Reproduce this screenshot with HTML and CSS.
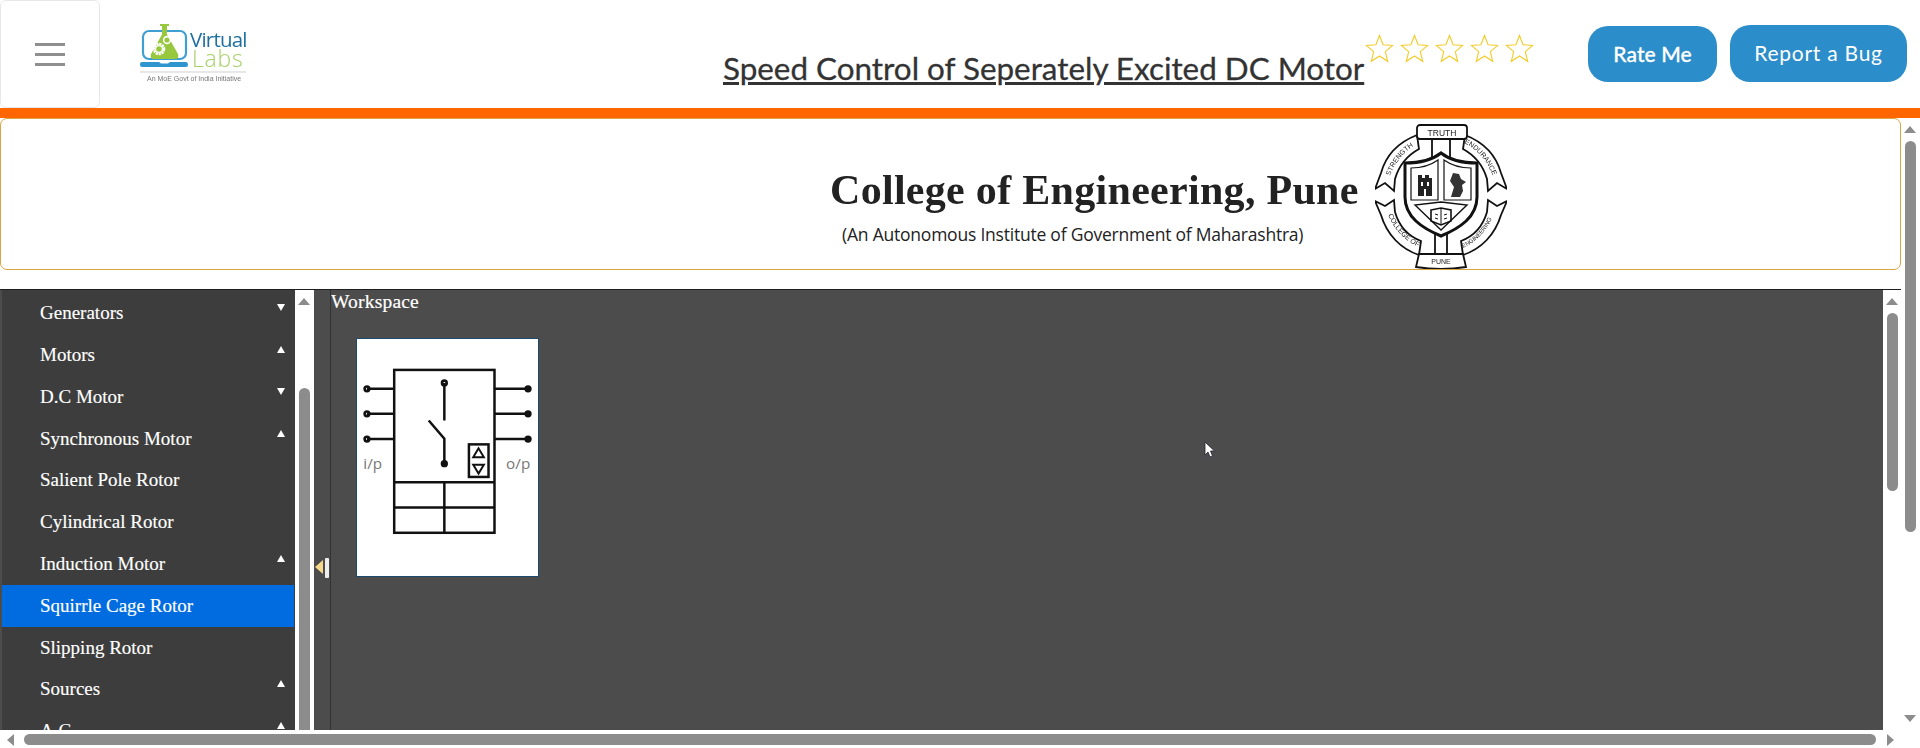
FILE: index.html
```html
<!DOCTYPE html>
<html lang="en">
<head>
    <meta charset="UTF-8">
    <meta name="viewport" content="width=device-width, initial-scale=1.0">
    <title>Speed Control of Seperately Excited DC Motor</title>
    <link rel="stylesheet" href="styles.css">
</head>
<body>
    <header class="topbar">
        <button class="menu-btn" aria-label="Menu"><span></span><span></span><span></span></button>
        <!-- Virtual Labs logo -->
        <svg class="vlab-logo" viewBox="0 0 108 60">
            <rect x="3" y="7" width="43" height="28" rx="6" fill="none" stroke="#3f9fd3" stroke-width="2.2"/>
            <path d="M0 40q0-2 2-2h17l2 1.500h7l2-1.500h16q2 0 2 2.500t-2 2.500H2q-2 0-2-2.500z" fill="#2f95cf"/>
            <path d="M20 0h9v2h-2v8.500L38 30q1.500 5-3 5H14q-4.500 0-3-5l11-19.500V2h-2z" fill="#97c83e"/>
            <circle cx="19" cy="25" r="5" fill="none" stroke="#fff" stroke-width="2.600" stroke-dasharray="2.200 .7"/>
            <circle cx="19" cy="25" r="3.400" fill="none" stroke="#fff" stroke-width="1.200"/>
            <circle cx="27" cy="16" r="3.400" fill="none" stroke="#fff" stroke-width="1.600"/>
            <text x="50" y="23" class="logo-virtual">Virtual</text>
            <text x="52" y="43" class="logo-labs">Labs</text>
            <line x1="0" y1="48" x2="106" y2="48" stroke="#bbb" stroke-width=".7"/>
            <text x="7" y="56.500" class="logo-sub">An MoE Govt of India Initiative</text>
        </svg>
        <h1 class="title">Speed Control of Seperately Excited DC Motor</h1>
        <div class="stars">
            <svg viewBox="0 0 30 30"><path d="M15 2l3.700 9.600 10 .7-7.700 6.500 2.500 10L15 23.300 6.500 28.800l2.500-10L1.300 12.300l10-.7z"/></svg>
            <svg viewBox="0 0 30 30"><path d="M15 2l3.700 9.600 10 .7-7.700 6.500 2.500 10L15 23.300 6.500 28.800l2.500-10L1.300 12.300l10-.7z"/></svg>
            <svg viewBox="0 0 30 30"><path d="M15 2l3.700 9.600 10 .7-7.700 6.500 2.500 10L15 23.300 6.500 28.800l2.500-10L1.300 12.300l10-.7z"/></svg>
            <svg viewBox="0 0 30 30"><path d="M15 2l3.700 9.600 10 .7-7.700 6.500 2.500 10L15 23.300 6.500 28.800l2.500-10L1.300 12.300l10-.7z"/></svg>
            <svg viewBox="0 0 30 30"><path d="M15 2l3.700 9.600 10 .7-7.700 6.500 2.500 10L15 23.300 6.500 28.800l2.500-10L1.300 12.300l10-.7z"/></svg>
        </div>
        <a class="pill rate" href="#">Rate Me</a>
        <a class="pill bug" href="#">Report a Bug</a>
    </header>
    <div class="orange-bar"></div>

    <div class="page">
        <main class="page-main">
            <section class="banner">
                <div class="banner-words">
                    <div class="college-name">College of Engineering, Pune</div>
                    <div class="college-sub">(An Autonomous Institute of Government of Maharashtra)</div>
                </div>
                <!-- college crest -->
                <svg class="crest" viewBox="0 0 132 146">
                    <defs>
                        <path id="rib-ul" d="M15 53C20 39 30 27 43 21"/>
                        <path id="rib-ur" d="M89 20C102 26 112 38 118 53"/>
                        <path id="rib-ll" d="M13 92C19 106 29 117 43 124"/>
                        <path id="rib-lr" d="M88 125C103 118 113 106 119 91"/>
                    </defs>
                    <g fill="#fff" stroke="#111" stroke-width="1.800">
                        <path d="M57 15v24M75 15v24M60 110v22M72 110v22" fill="none"/>
                        <path d="M42 12C24 19 11 32 6 50L0 66l10-6 9 8 1-12C24 42 33 32 44 26z"/>
                        <path d="M90 12C108 19 121 32 126 50L132 66l-10-6-9 8-1-12C108 42 99 32 88 26z"/>
                        <path d="M44 132C26 126 12 112 6 92L0 78l10 5 9-6 1 12C24 103 33 113 46 118z"/>
                        <path d="M88 132C106 126 120 112 126 92L132 78l-10 5-9-6-1 12C108 103 99 113 86 118z"/>
                        <rect x="42" y="2" width="50" height="14" rx="3"/>
                        <path d="M44 131h44l3 13q-25 4-50 0z"/>
                    </g>
                    <path d="M66 30c10 8 22 10 36 10v34c0 20-17 31-36 39-19-8-36-19-36-39V40c14 0 26-2 36-10z" fill="#fff" stroke="#111" stroke-width="3"/>
                    <path d="M36 45c11 0 20-3 27-8v40H36z" fill="none" stroke="#111" stroke-width="1.200"/>
                    <path d="M69 37c7 5 16 8 27 8v32H69z" fill="none" stroke="#111" stroke-width="1.200"/>
                    <path d="M40 82l26 25 26-25-26-3z" fill="none" stroke="#111" stroke-width="1.400"/>
                    <path d="M43 52h4v3h3v-3h4v3h3v18H43z" fill="#222"/>
                    <path d="M46 59h2v4h-2zM52 59h2v4h-2zM49 66h2v7h-2z" fill="#fff"/>
                    <path d="M78 50l6 1 2 5 5 3-4 3 1 6-3 6h-9l3-10-4-6z" fill="#333"/>
                    <path d="M56 87l10-2 10 2v11l-10 4-10-4z" fill="none" stroke="#111" stroke-width="1.600"/>
                    <path d="M66 85v17M60 91l3 1M60 95l3 1M69 92l3-1M69 96l3-1" stroke="#111" stroke-width="1"/>
                    <text x="67" y="12.500" class="crest-txt" text-anchor="middle">TRUTH</text>
                    <text x="66" y="141" class="crest-txt small" text-anchor="middle">PUNE</text>
                    <text class="crest-txt small"><textPath href="#rib-ul">STRENGTH</textPath></text>
                    <text class="crest-txt small"><textPath href="#rib-ur">ENDURANCE</textPath></text>
                    <text class="crest-txt small"><textPath href="#rib-ll">COLLEGE OF</textPath></text>
                    <text class="crest-txt tiny"><textPath href="#rib-lr">ENGINEERING</textPath></text>
                </svg>
            </section>

            <div class="sim-frame">
                <nav class="menu-pane">
                    <ul class="menu-list">
                        <li>Generators<i class="caret down"></i></li>
                        <li>Motors<i class="caret up"></i></li>
                        <li>D.C Motor<i class="caret down"></i></li>
                        <li>Synchronous Motor<i class="caret up"></i></li>
                        <li>Salient Pole Rotor</li>
                        <li>Cylindrical Rotor</li>
                        <li>Induction Motor<i class="caret up"></i></li>
                        <li class="active">Squirrle Cage Rotor</li>
                        <li>Slipping Rotor</li>
                        <li>Sources<i class="caret up"></i></li>
                        <li>A.C<i class="caret up"></i></li>
                    </ul>
                </nav>
                <div class="sb sb-menu">
                    <i class="arrow-up"></i>
                    <div class="thumb"></div>
                </div>
                <div class="splitter">
                    <i class="grip-arrow"></i><i class="grip-bar"></i>
                </div>
                <div class="workspace">
                    <div class="ws-label">Workspace</div>
                    <div class="block-card">
                        <!-- breaker block -->
                        <svg class="block-svg" viewBox="50 40 545 713" preserveAspectRatio="none">
                            <g fill="none" stroke="#111" stroke-width="7.500">
                                <rect x="162" y="133" width="302" height="490"/>
                                <path d="M162 471h302M162 547h302M313 471v152"/>
                                <path d="M80 190h82M80 265h82M80 341h82M464 190h101M464 265h101M464 341h101"/>
                                <path d="M313 172v113M266 285l47 55v75"/>
                                <rect x="387" y="357" width="59" height="98"/>
                                <path d="M416 369l-16 27h32zM400 418h32l-16 27z" stroke-width="6"/>
                                <circle cx="80" cy="190" r="7" stroke-width="8"/>
                                <circle cx="80" cy="265" r="7" stroke-width="8"/>
                                <circle cx="80" cy="341" r="7" stroke-width="8"/>
                                <circle cx="313" cy="172" r="7" stroke-width="8"/>
                            </g>
                            <g fill="#111">
                                <circle cx="565" cy="190" r="11"/>
                                <circle cx="565" cy="265" r="11"/>
                                <circle cx="565" cy="341" r="11"/>
                                <circle cx="313" cy="415" r="11"/>
                            </g>
                            <text x="69" y="432" class="block-txt">i/p</text>
                            <text x="499" y="432" class="block-txt">o/p</text>
                        </svg>
                    </div>
                    <svg class="cursor" viewBox="0 0 12 17"><path d="M1 1v13l3-3 2 5 2.500-1-2-5h4z" fill="#fff" stroke="#223" stroke-width=".8"/></svg>
                </div>
                <div class="sb sb-inner">
                    <i class="arrow-up"></i>
                    <div class="thumb"></div>
                </div>
            </div>
        </main>
        <div class="sb sb-page">
            <i class="arrow-up"></i>
            <div class="thumb"></div>
            <i class="arrow-down"></i>
        </div>
    </div>

    <div class="sb-horizontal">
        <i class="arrow-left"></i>
        <div class="thumb"></div>
        <i class="arrow-right"></i>
    </div>
</body>
</html>
```

FILE: styles.css
```css
/* page */
html, body {
    height: 100%;
}

body {
    margin: 0;
    width: 1920px;
    height: 748px;
    overflow: hidden;
    display: flex;
    flex-direction: column;
    background-color: #fff;
    font-family: "Liberation Serif", serif;
}

/* header */
.topbar {
    height: 108px;
    display: flex;
    flex-shrink: 0;
    background-color: #fff;
}

.menu-btn {
    width: 100px;
    height: 108px;
    padding: 0;
    display: flex;
    flex-direction: column;
    align-items: center;
    justify-content: center;
    gap: 7px;
    background-color: #fff;
    border: 1px solid #e8e8e8;
    border-radius: 6px;
}

.menu-btn span {
    width: 30px;
    height: 3px;
    background-color: #8f8f8f;
}

.vlab-logo {
    width: 108px;
    height: 60px;
    margin: 24px 0 0 40px;
    flex-shrink: 0;
    filter: blur(.3px);
}

.logo-virtual {
    font-family: "Open Sans", sans-serif;
    font-size: 20.500px;
    fill: #1f6f9f;
    letter-spacing: -.8px;
}

.logo-labs {
    font-family: "Open Sans", sans-serif;
    font-weight: 300;
    font-size: 23px;
    fill: #a9d16b;
    letter-spacing: .8px;
}

.logo-sub {
    font-family: "Liberation Sans", sans-serif;
    font-size: 7px;
    fill: #777;
}

.title {
    margin: 49px 0 0 475px;
    width: 641px;
    flex-shrink: 0;
    font-family: "Lato", sans-serif;
    font-size: 31.400px;
    font-weight: 400;
    line-height: 38px;
    white-space: nowrap;
    color: #333;
    text-decoration: underline;
    -webkit-text-stroke: .3px #333;
}

.stars {
    display: flex;
    gap: 6px;
    margin: 33px 0 0 1px;
}

.stars svg {
    width: 29px;
    height: 30px;
}

.stars path {
    fill: #fff;
    stroke: #f2cd30;
    stroke-width: 1.200;
}

.pill {
    height: 56px;
    line-height: 56px;
    margin-top: 26px;
    text-align: center;
    background-color: #2b8dc9;
    color: #fff;
    border-radius: 20px;
    font-family: "Lato", sans-serif;
    font-size: 21px;
    text-decoration: none;
}

.rate {
    width: 129px;
    margin-left: 54px;
    font-weight: 500;
    letter-spacing: .1px;
    -webkit-text-stroke: .3px #fff;
}

.bug {
    width: 177px;
    height: 57px;
    margin-top: 25px;
    margin-left: 13px;
    letter-spacing: .75px;
}

.orange-bar {
    height: 10px;
    flex-shrink: 0;
    background-color: #f60;
}

/* body of the page */
.page {
    flex: 1;
    min-height: 0;
    display: flex;
}

.page-main {
    width: 1901px;
    flex-shrink: 0;
    display: flex;
    flex-direction: column;
}

.banner {
    height: 152px;
    box-sizing: border-box;
    flex-shrink: 0;
    display: flex;
    padding: 4px 0 0 829px;
    background-color: #fff;
    border: 1px solid #d9a441;
    border-radius: 7px;
}

.banner-words {
    width: 544px;
    flex-shrink: 0;
}

.college-name {
    margin-top: 41px;
    font-size: 42px;
    line-height: 52px;
    font-weight: 700;
    color: #222;
    white-space: nowrap;
    letter-spacing: .3px;
    filter: blur(.6px);
}

.college-sub {
    margin: 6px 0 0 12px;
    font-family: "Open Sans", sans-serif;
    font-size: 17.500px;
    letter-spacing: -.22px;
    line-height: 24px;
    color: #222;
    white-space: nowrap;
}

.crest {
    width: 132px;
    height: 146px;
    flex-shrink: 0;
    margin-left: 1px;
    filter: blur(.3px);
}

.crest-txt {
    font-family: "Liberation Sans", sans-serif;
    font-size: 8.500px;
    fill: #222;
}

.crest-txt.small {
    font-size: 7px;
}

.crest-txt.tiny {
    font-size: 6px;
}

.sim-frame {
    height: 441px;
    margin-top: 19px;
    flex-shrink: 0;
    display: flex;
    border-top: 1px solid #1f1f1f;
    box-sizing: border-box;
    background-color: #4c4c4c;
}

/* left tree */
.menu-pane {
    width: 293px;
    margin-left: 2px;
    flex-shrink: 0;
    overflow: hidden;
    background-color: #3d3d3d;
}

.menu-list {
    list-style: none;
    margin: 2.300px 0 0;
    padding: 0;
}

.menu-list li {
    position: relative;
    height: 41.800px;
    line-height: 41.800px;
    padding-left: 38px;
    font-size: 19px;
    color: #fff;
    -webkit-text-stroke: .15px #fff;
}

.menu-list li.active {
    background-color: #006ce0;
    margin-right: 1px;
}

.caret {
    position: absolute;
    left: 275px;
    width: 0;
    height: 0;
    border-left: 4px solid transparent;
    border-right: 4px solid transparent;
}

.caret.up {
    top: 12px;
    border-bottom: 7px solid #fff;
}

.caret.down {
    top: 12px;
    border-top: 7px solid #fff;
}

.splitter {
    width: 17px;
    flex-shrink: 0;
    display: flex;
    align-items: flex-start;
    gap: 2px;
    padding: 268px 0 0 1px;
    box-sizing: border-box;
    border-right: 1px solid #333;
}

.grip-arrow {
    width: 0;
    height: 0;
    margin-top: 2px;
    border-top: 7px solid transparent;
    border-bottom: 7px solid transparent;
    border-right: 8px solid #f5d88c;
}

.grip-bar {
    width: 4px;
    height: 20px;
    border-radius: 1px;
    background-color: #eee;
}

.workspace {
    flex: 1;
    position: relative;
    overflow: hidden;
    color: #fff;
}

.ws-label {
    font-size: 19.500px;
    line-height: 24px;
    height: 26px;
    letter-spacing: .2px;
    -webkit-text-stroke: .2px #fff;
}

.block-card {
    width: 183px;
    height: 239px;
    margin: 22px 0 0 25px;
    box-sizing: border-box;
    background-color: #fff;
    border: 1px solid #1c4a6e;
}

.block-svg {
    display: block;
    width: 100%;
    height: 100%;
}

.block-txt {
    font-family: "Open Sans", sans-serif;
    font-size: 46px;
    fill: #777;
}

.cursor {
    position: absolute;
    left: 873px;
    top: 151px;
    width: 12px;
    height: 17px;
}

/* scrollbars */
.sb {
    width: 19px;
    flex-shrink: 0;
    position: relative;
    background-color: #fff;
    overflow: hidden;
}

.sb .thumb {
    position: absolute;
    left: 4px;
    width: 11px;
    background-color: #8c8c8c;
    border-radius: 6px;
}

.sb .arrow-up,
.sb .arrow-down {
    position: absolute;
    left: 3px;
    width: 0;
    height: 0;
    border-left: 6.500px solid transparent;
    border-right: 6.500px solid transparent;
}

.sb .arrow-up {
    top: 8px;
    border-bottom: 7px solid #8c8c8c;
}

.sb .arrow-down {
    bottom: 9px;
    border-top: 7px solid #8c8c8c;
}

.sb-menu .thumb {
    top: 98px;
    height: 400px;
}

.sb-inner {
    width: 18px;
}

.sb-inner .thumb {
    top: 23px;
    height: 178px;
}

.sb-page .thumb {
    top: 23px;
    height: 391px;
}

.sb-horizontal {
    height: 17px;
    flex-shrink: 0;
    display: flex;
    align-items: center;
    background-color: #fff;
    position: relative;
}

.sb-horizontal .thumb {
    width: 1852px;
    height: 11px;
    margin-left: 10px;
    background-color: #8c8c8c;
    border-radius: 6px;
}

.arrow-left {
    width: 0;
    height: 0;
    margin-left: 7px;
    border-top: 6.500px solid transparent;
    border-bottom: 6.500px solid transparent;
    border-right: 7px solid #8c8c8c;
}

.arrow-right {
    width: 0;
    height: 0;
    margin-left: 11px;
    border-top: 6.500px solid transparent;
    border-bottom: 6.500px solid transparent;
    border-left: 7px solid #8c8c8c;
}
```
